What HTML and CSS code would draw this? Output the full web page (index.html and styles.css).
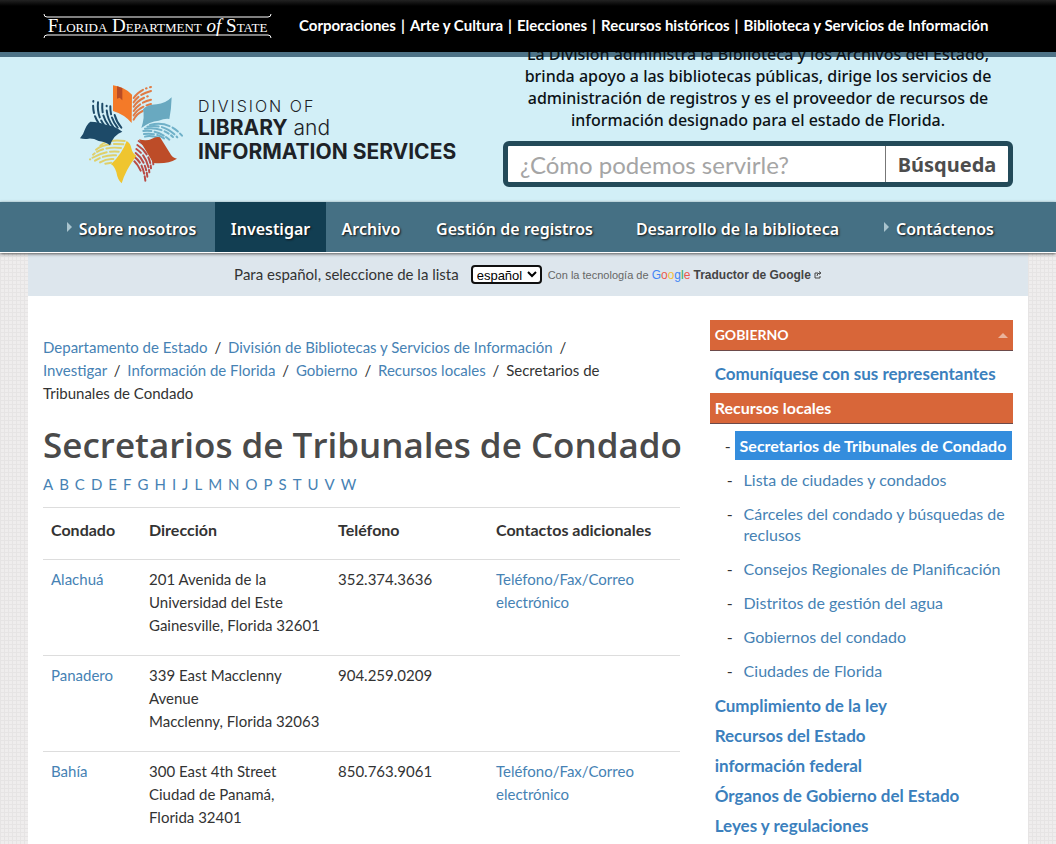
FILE: index.html
```
<!DOCTYPE html>
<html lang="es">
<head>
<meta charset="utf-8">
<meta name="viewport" content="width=device-width, initial-scale=1">
<title>Secretarios de Tribunales de Condado</title>
<link rel="stylesheet" href="styles.css">
</head>
<body>
<header class="topbar">
  <div class="wrap topbar-inner">
    <a class="state-logo" href="#">
      <svg class="rule" viewBox="0 0 229 4" preserveAspectRatio="none" aria-hidden="true"><path d="M1 0Q1 3 4 3H225Q228 3 228 0" fill="none" stroke="#fff"/></svg>
      <span class="state-name">Florida Department <i>of</i> State</span>
      <svg class="rule" viewBox="0 0 229 4" preserveAspectRatio="none" aria-hidden="true"><path d="M1 4Q1 1 4 1H225Q228 1 228 4" fill="none" stroke="#fff"/></svg>
    </a>
    <nav class="state-nav" aria-label="Departamento">
      <a href="#">Corporaciones</a><span>|</span><a href="#">Arte y Cultura</a><span>|</span><a href="#">Elecciones</a><span>|</span><a href="#">Recursos históricos</a><span>|</span><a href="#">Biblioteca y Servicios de Información</a>
    </nav>
  </div>
</header>

<section class="hero">
  <div class="wrap hero-inner">
    <a class="brand" href="#">
      <svg class="brand-mark" viewBox="0 0 375 345" aria-hidden="true">
        <g fill="none" stroke-width="6" stroke-linecap="round">
          <g stroke="#e07b45">
            <path d="M191 69Q207 44 243 36" stroke-dasharray="38 10 2 10"/>
            <path d="M191 82Q207 57 243 48" stroke-dasharray="22 10 60"/>
            <path d="M191 95Q207 70 243 61" stroke-dasharray="42 10 2 10"/>
            <path d="M191 108Q207 83 243 74" stroke-dasharray="28 10 60"/>
            <path d="M191 121Q207 96 243 87" stroke-dasharray="40 10 60"/>
            <path d="M191 134Q200 116 218 108"/>
          </g>
          <g stroke="#6fb0c8">
            <path d="M240 150Q295 135 336 182" stroke-dasharray="60 10 20 9"/>
            <path d="M232 155Q285 145 322 187" stroke-dasharray="34 10 44 9"/>
            <path d="M225 161Q275 155 309 186" stroke-dasharray="50 10 14 9"/>
            <path d="M220 168Q262 163 298 194" stroke-dasharray="24 10 30 8"/>
            <path d="M222 177Q255 172 282 190" stroke-dasharray="30 10"/>
            <path d="M225 185Q240 180 266 188"/>
          </g>
          <g stroke="#b94b45">
            <path d="M206 198Q248 225 250 268" stroke-dasharray="30 10 60"/>
            <path d="M202 210Q240 235 243 280" stroke-dasharray="40 10 18 8"/>
            <path d="M199 222Q233 245 238 292" stroke-dasharray="18 10 40 8"/>
            <path d="M197 234Q226 255 232 305" stroke-dasharray="38 10 14 8"/>
            <path d="M195 247Q220 265 226 317" stroke-dasharray="22 10 26 8"/>
            <path d="M193 259Q203 268 212 287"/>
          </g>
          <g stroke="#dfd06a">
            <path d="M164 198Q110 192 91 212" stroke-dasharray="44 10 60"/>
            <path d="M160 208Q105 202 78 224" stroke-dasharray="28 10 60"/>
            <path d="M153 219Q100 213 69 239" stroke-dasharray="44 10 20 8"/>
            <path d="M146 230Q100 226 60 253" stroke-dasharray="26 10 46 8"/>
            <path d="M138 241Q105 238 75 257" stroke-dasharray="40 10"/>
            <path d="M130 252Q110 250 90 262"/>
            <path d="M124 263L106 266"/>
          </g>
          <g stroke="#1d4a68">
            <path d="M70 78Q66 115 85 143" stroke-dasharray="2 12 22 10 60"/>
            <path d="M84 82Q80 120 101 148" stroke-dasharray="46 10 60"/>
            <path d="M97 86Q94 125 116 152" stroke-dasharray="26 10 60"/>
            <path d="M110 92Q108 128 130 156" stroke-dasharray="2 12 60"/>
            <path d="M121 94Q120 130 143 158" stroke-dasharray="24 10 60"/>
            <path d="M134 120Q140 142 154 158"/>
          </g>
        </g>
        <path fill="#f47a28" d="M129 31Q164 36 186 59L185 144Q163 118 129 108Z"/>
        <path fill="#b94c25" d="M141 34L157 39V76L149 68L141 71Z"/>
        <path fill="#69a9c0" d="M219 103Q230 90 260 88Q286 86 305 67Q304 102 298 132Q284 130 266 137Q238 140 214 159Q225 126 219 103Z"/>
        <path fill="#bd4c28" d="M207 193Q231 199 246 191Q258 184 270 187L300 235Q307 250 321 251Q294 268 250 264Z"/>
        <path fill="#efc52f" d="M170 198Q181 204 184 220Q188 237 199 242Q166 286 155 325Q143 315 139 291Q133 273 123 268Q157 235 170 198Z"/>
        <path fill="#1d4a68" d="M61 140Q89 141 110 150Q133 152 157 170Q131 179 120 211Q104 199 86 198Q66 188 51 192Q40 193 30 190Q41 177 44 165Q50 148 61 140Z"/>
      </svg>
      <span class="brand-text">
        <span class="brand-small">DIVISION OF</span>
        <span class="brand-line"><b>LIBRARY</b> and</span>
        <span class="brand-line"><b>INFORMATION SERVICES</b></span>
      </span>
    </a>
    <div class="hero-side">
      <p class="mission">La División administra la Biblioteca y los Archivos del Estado, brinda apoyo a las bibliotecas públicas, dirige los servicios de administración de registros y es el proveedor de recursos de información designado para el estado de Florida.</p>
      <form class="search">
        <input type="text" aria-label="Buscar" placeholder="¿Cómo podemos servirle?">
        <button type="button">Búsqueda</button>
      </form>
    </div>
  </div>
</section>

<nav class="mainnav" aria-label="Principal">
  <div class="wrap mainnav-inner">
    <a class="arrow" href="#">Sobre nosotros</a>
    <a class="current" href="#">Investigar</a>
    <a href="#">Archivo</a>
    <a href="#">Gestión de registros</a>
    <a href="#">Desarrollo de la biblioteca</a>
    <a class="arrow" href="#">Contáctenos</a>
  </div>
</nav>

<div class="wrap page">
  <div class="translate">
    <label for="lang">Para español, seleccione de la lista</label>
    <select id="lang"><option>español</option></select>
    <span class="powered">Con la tecnología de <span class="google"><span class="g-b">G</span><span class="g-r">o</span><span class="g-y">o</span><span class="g-b">g</span><span class="g-g">l</span><span class="g-r">e</span></span> <a href="#">Traductor de Google</a>
      <svg class="ext" viewBox="0 0 8 8" aria-hidden="true"><path d="M4 2H1V7H6V5M3 5Q3 2 6 2M5 0.5L7 2L5 3.5" fill="none" stroke="#444"/></svg></span>
  </div>
  <div class="columns">
    <main class="content">
      <nav class="crumbs" aria-label="Ruta">
        <a href="#">Departamento de Estado</a> <i>/</i> <a href="#">División de Bibliotecas y Servicios de Información</a> <i>/</i> <a href="#">Investigar</a> <i>/</i> <a href="#">Información de Florida</a> <i>/</i> <a href="#">Gobierno</a> <i>/</i> <a href="#">Recursos locales</a> <i>/</i> Secretarios de Tribunales de Condado
      </nav>
      <h1>Secretarios de Tribunales de Condado</h1>
      <div class="letters"><a href="#">A</a><a href="#">B</a><a href="#">C</a><a href="#">D</a><a href="#">E</a><a href="#">F</a><a href="#">G</a><a href="#">H</a><a href="#">I</a><a href="#">J</a><a href="#">L</a><a href="#">M</a><a href="#">N</a><a href="#">O</a><a href="#">P</a><a href="#">S</a><a href="#">T</a><a href="#">U</a><a href="#">V</a><a href="#">W</a></div>
      <table class="counties">
        <colgroup><col class="c1"><col class="c2"><col class="c3"><col class="c4"></colgroup>
        <thead>
          <tr><th>Condado</th><th>Dirección</th><th>Teléfono</th><th>Contactos adicionales</th></tr>
        </thead>
        <tbody>
          <tr><td><a href="#">Alachuá</a></td><td>201 Avenida de la<br>Universidad del Este<br>Gainesville, Florida 32601</td><td>352.374.3636</td><td><a href="#">Teléfono/Fax/Correo<br>electrónico</a></td></tr>
          <tr><td><a href="#">Panadero</a></td><td>339 East Macclenny<br>Avenue<br>Macclenny, Florida 32063</td><td>904.259.0209</td><td></td></tr>
          <tr><td><a href="#">Bahía</a></td><td>300 East 4th Street<br>Ciudad de Panamá,<br>Florida 32401</td><td>850.763.9061</td><td><a href="#">Teléfono/Fax/Correo<br>electrónico</a></td></tr>
        </tbody>
      </table>
    </main>
    <aside class="side">
      <a class="bar bar-top" href="#">GOBIERNO</a>
      <ul class="menu">
        <li><a href="#">Comuníquese con sus representantes</a></li>
        <li><a class="bar" href="#">Recursos locales</a>
          <ul class="sub">
            <li class="active"><a href="#">Secretarios de Tribunales de Condado</a></li>
            <li><a href="#">Lista de ciudades y condados</a></li>
            <li><a href="#">Cárceles del condado y búsquedas de reclusos</a></li>
            <li><a href="#">Consejos Regionales de Planificación</a></li>
            <li><a href="#">Distritos de gestión del agua</a></li>
            <li><a href="#">Gobiernos del condado</a></li>
            <li><a href="#">Ciudades de Florida</a></li>
          </ul>
        </li>
        <li><a href="#">Cumplimiento de la ley</a></li>
        <li><a href="#">Recursos del Estado</a></li>
        <li><a href="#">información federal</a></li>
        <li><a href="#">Órganos de Gobierno del Estado</a></li>
        <li><a href="#">Leyes y regulaciones</a></li>
      </ul>
    </aside>
  </div>
</div>
</body>
</html>
```
FILE: styles.css
```
* { box-sizing: border-box; }
body {
  margin: 0;
  min-height: 100vh;
  display: flex;
  flex-direction: column;
  color: #333;
  font: 15px/23px Lato, "Liberation Sans", sans-serif;
  background-color: #efeded;
  background-image:
    linear-gradient(to right, #e6e4e4 1px, transparent 1px),
    linear-gradient(to bottom, #e6e4e4 1px, transparent 1px);
  background-size: 4px 4px;
}
a { color: #4682b4; text-decoration: none; }
.wrap { width: 100%; max-width: 1000px; margin: 0 auto; }

.topbar { position: relative; z-index: 2; background: linear-gradient(#222, #000 6px); }
.topbar-inner { display: flex; align-items: center; gap: 27px; height: 52px; padding: 0 15px; }
.state-logo { display: flex; flex-direction: column; flex: none; width: 229px; color: #fff; }
.state-name {
  font: 19px/16px "Liberation Serif", serif;
  font-variant: small-caps;
  text-align: center;
  white-space: nowrap;
}
.state-name i { font-variant: normal; }
.rule { display: block; width: 100%; height: 4px; }
.state-nav { display: flex; gap: 5px; white-space: nowrap; font-size: 15px; line-height: 20px; padding-bottom: 3px; font-weight: 700; color: #fff; }
.state-nav a { color: #fff; }

.hero { background: #d2eff7; border-top: 5px solid #4d7286; }
.hero-inner { display: flex; justify-content: space-between; height: 145px; padding: 0 15px 0 42px; }
.brand { display: flex; align-items: center; color: #1d2227; gap: 3px; }
.brand-mark { width: 125px; height: 115px; margin-top: 6px; }
.brand-text { display: flex; flex-direction: column; font: 300 21px/24px Inter, sans-serif; white-space: nowrap; }
.brand-small { font-size: 16px; line-height: 20px; letter-spacing: 2px; }
.brand-line b { font-weight: 700; }
.hero-side { width: 510px; margin-top: -14px; }
.mission {
  margin: 0 0 10px;
  padding: 0 15px;
  color: #0c1216;
  font: 500 16px/22px "Noto Sans", sans-serif;
  text-align: center;
}
.search { display: flex; border: 5px solid #234a59; border-radius: 6px; background: #fff; height: 46px; }
.search input {
  flex: 1;
  min-width: 0;
  border: 0;
  padding: 0 12px;
  border-radius: 4px 0 0 4px;
  color: #333;
  font: 24px Lato, sans-serif;
}
.search input::placeholder { color: #a5a5a5; }
.search button {
  width: 123px;
  padding: 0;
  border: 0;
  border-left: 1px solid #777;
  border-radius: 0 4px 4px 0;
  background: #fff;
  color: #4d4d4d;
  font: 700 20px "Noto Sans", sans-serif;
}

.mainnav { position: relative; z-index: 1; background: #457084; border-bottom: 1px solid #fff; box-shadow: 0 1px 3px #555; }
.mainnav-inner { display: grid; grid-template-columns: 187fr 111fr 90fr 197fr 249fr 166fr; }
.mainnav a {
  display: flex;
  align-items: center;
  justify-content: center;
  height: 50px;
  padding-top: 4px;
  color: #fff;
  font: 600 16px/22px "Noto Sans", sans-serif;
  text-shadow: 1px 1px 2px #111;
  white-space: nowrap;
}
.mainnav .current { background: #123e52; }
.mainnav .arrow { padding-right: 12px; }
.mainnav .arrow:first-child { padding-left: 32px; }
.arrow::before {
  content: "";
  margin: 0 7px 4px 0;
  border: 5px solid transparent;
  border-left-color: #a9c4ce;
  border-right-width: 0;
}

.page { flex: 1; background: #fff; }
.translate { display: flex; align-items: center; justify-content: center; height: 43px; background: #dde6ed; }
.translate select {
  width: 71px;
  height: 19px;
  margin: 0 6px 0 12px;
  padding: 0;
  border: 2px solid #101010;
  border-radius: 4px;
  background: #fff;
  color: #000;
  font: 13px/15px "Liberation Sans", sans-serif;
}
.powered { color: #666; font: 11px/20px "Liberation Sans", sans-serif; }
.powered a { color: #444; font-weight: 700; font-size: 12px; }
.google { font-size: 12px; }
.g-b { color: #4285f4; } .g-r { color: #ea5a4d; } .g-y { color: #f5c03a; } .g-g { color: #34a853; }
.ext { width: 8px; height: 8px; }

.columns { display: grid; grid-template-columns: minmax(0, 2fr) minmax(0, 1fr); }
.content { padding: 40px 15px 0; }
.crumbs { padding-right: 50px; }
.crumbs i { margin: 0 3px; font-style: normal; }
h1 { margin: 20px 0 8px; color: #4a4a4a; font: 600 35px/40px "Open Sans", sans-serif; white-space: nowrap; }
.letters { display: flex; gap: 6px; margin-bottom: 11px; }
.counties { width: 100%; border-collapse: collapse; table-layout: fixed; }
.c1 { width: 98px; } .c2 { width: 189px; } .c3 { width: 158px; }
th, td { padding: 8px 8px 18px; border-top: 1px solid #ddd; text-align: left; vertical-align: top; }
th { padding-top: 10px; font-size: 16px; }

.side { padding: 24px 15px 0; }
.side ul { list-style: none; margin: 0; padding: 0; }
.menu > li > a { display: block; padding: 0 5px; font-weight: 700; line-height: 30px; font-size: 17px; color: #3b80bd; }
.side .bar { display: block; padding: 0 5px; background: #d86639; border-bottom: 1px solid #6c4a4a; color: #fff; font-size: 16px; font-weight: 700; line-height: 30px; }
.side .bar-top { position: relative; margin-bottom: 8px; font-size: 14px; }
.bar-top::after {
  content: "";
  position: absolute;
  right: 5px;
  top: 13px;
  border: 5px solid transparent;
  border-bottom-color: #eab39c;
  border-top-width: 0;
}
.menu > li > .bar { margin-top: 4px; }
.sub > li { display: flex; gap: 11px; padding: 6px 0 7px 17px; line-height: 21px; font-size: 16px; }
.side .sub { padding: 7px 0 3px; }
.sub > li::before { content: "-"; }
.sub > .active { gap: 4px; align-items: center; padding: 0 1px 3px 15px; }
.active a { flex: 1; padding: 4px 5px; background: #348ddd; color: #fff; font-weight: 700; font-size: 16px; white-space: nowrap; }
```
